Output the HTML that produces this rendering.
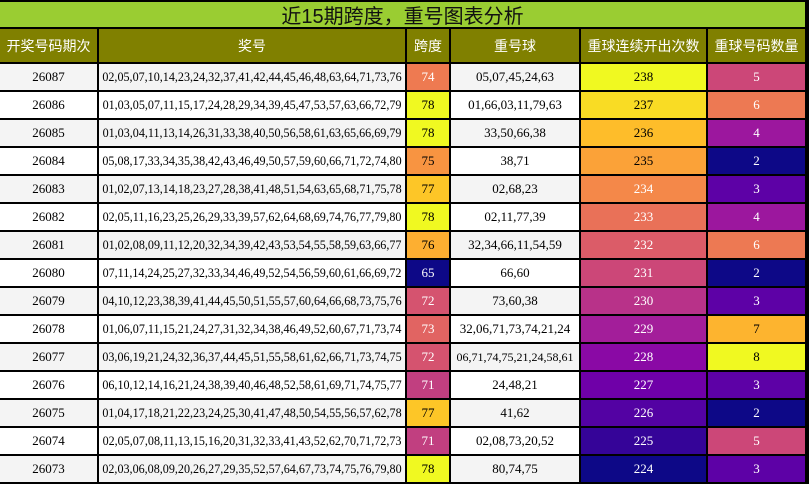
<!DOCTYPE html><html><head><meta charset="utf-8"><style>
body{margin:0;background:#000;}
.g{width:809px;height:484px;box-sizing:border-box;padding:2px 0 2px 0;background:#000;display:grid;grid-template-columns:minmax(0,97px) minmax(0,306px) minmax(0,42px) minmax(0,128px) minmax(0,125px) minmax(0,97px);grid-template-rows:25px 33px repeat(15,26px);gap:2px;font-family:"Liberation Serif","Noto Serif CJK SC",serif;font-size:13px;}
.g>div{display:flex;align-items:center;justify-content:center;white-space:nowrap;overflow:hidden;min-width:0;}
.t{grid-column:1/7;background:#9acd32;font-family:"Liberation Sans","Noto Sans CJK SC",sans-serif;font-size:20px;color:#111;}
.h{background:#808000;color:#fff;font-family:"Liberation Sans","Noto Sans CJK SC",sans-serif;font-size:14px;}
.o{background:#f4f4f4}.e{background:#fff}.w{color:#fff}
.g>div:nth-child(6n+3):not(.h){font-size:12.1px;}
.s{font-size:12px!important}
</style></head><body><div class="g">
<div class="t">近15期跨度，重号图表分析</div>
<div class="h">开奖号码期次</div><div class="h">奖号</div><div class="h">跨度</div><div class="h">重号球</div><div class="h">重球连续开出次数</div><div class="h">重球号码数量</div>

<div class="o">26087</div><div class="o">02,05,07,10,14,23,24,32,37,41,42,44,45,46,48,63,64,71,73,76</div><div class="w" style="background:#ee7a51">74</div><div class="o">05,07,45,24,63</div><div style="background:#f0f921">238</div><div class="w" style="background:#cc4778">5</div>
<div class="e">26086</div><div class="e">01,03,05,07,11,15,17,24,28,29,34,39,45,47,53,57,63,66,72,79</div><div style="background:#f0f921">78</div><div class="e">01,66,03,11,79,63</div><div style="background:#f9dc24">237</div><div class="w" style="background:#ed7953">6</div>
<div class="o">26085</div><div class="o">01,03,04,11,13,14,26,31,33,38,40,50,56,58,61,63,65,66,69,79</div><div style="background:#f0f921">78</div><div class="o">33,50,66,38</div><div style="background:#febd2a">236</div><div class="w" style="background:#9c179e">4</div>
<div class="e">26084</div><div class="e">05,08,17,33,34,35,38,42,43,46,49,50,57,59,60,66,71,72,74,80</div><div style="background:#f89441">75</div><div class="e">38,71</div><div style="background:#fba238">235</div><div class="w" style="background:#0d0887">2</div>
<div class="o">26083</div><div class="o">01,02,07,13,14,18,23,27,28,38,41,48,51,54,63,65,68,71,75,78</div><div style="background:#fdc627">77</div><div class="o">02,68,23</div><div class="w" style="background:#f48849">234</div><div class="w" style="background:#5d01a6">3</div>
<div class="e">26082</div><div class="e">02,05,11,16,23,25,26,29,33,39,57,62,64,68,69,74,76,77,79,80</div><div style="background:#f0f921">78</div><div class="e">02,11,77,39</div><div class="w" style="background:#e97158">233</div><div class="w" style="background:#9c179e">4</div>
<div class="o">26081</div><div class="o">01,02,08,09,11,12,20,32,34,39,42,43,53,54,55,58,59,63,66,77</div><div style="background:#fdaf31">76</div><div class="o">32,34,66,11,54,59</div><div class="w" style="background:#db5c68">232</div><div class="w" style="background:#ed7953">6</div>
<div class="e">26080</div><div class="e">07,11,14,24,25,27,32,33,34,46,49,52,54,56,59,60,61,66,69,72</div><div class="w" style="background:#0d0887">65</div><div class="e">66,60</div><div class="w" style="background:#cc4778">231</div><div class="w" style="background:#0d0887">2</div>
<div class="o">26079</div><div class="o">04,10,12,23,38,39,41,44,45,50,51,55,57,60,64,66,68,73,75,76</div><div class="w" style="background:#d5536f">72</div><div class="o">73,60,38</div><div class="w" style="background:#b83289">230</div><div class="w" style="background:#5d01a6">3</div>
<div class="e">26078</div><div class="e">01,06,07,11,15,21,24,27,31,32,34,38,46,49,52,60,67,71,73,74</div><div class="w" style="background:#e16462">73</div><div class="e">32,06,71,73,74,21,24</div><div class="w" style="background:#a31e9a">229</div><div style="background:#fdb42f">7</div>
<div class="o">26077</div><div class="o">03,06,19,21,24,32,36,37,44,45,51,55,58,61,62,66,71,73,74,75</div><div class="w" style="background:#d5536f">72</div><div class="o s">06,71,74,75,21,24,58,61</div><div class="w" style="background:#8a09a5">228</div><div style="background:#f0f921">8</div>
<div class="e">26076</div><div class="e">06,10,12,14,16,21,24,38,39,40,46,48,52,58,61,69,71,74,75,77</div><div class="w" style="background:#c13f80">71</div><div class="e">24,48,21</div><div class="w" style="background:#6f00a8">227</div><div class="w" style="background:#5d01a6">3</div>
<div class="o">26075</div><div class="o">01,04,17,18,21,22,23,24,25,30,41,47,48,50,54,55,56,57,62,78</div><div style="background:#fdc627">77</div><div class="o">41,62</div><div class="w" style="background:#5302a3">226</div><div class="w" style="background:#0d0887">2</div>
<div class="e">26074</div><div class="e">02,05,07,08,11,13,15,16,20,31,32,33,41,43,52,62,70,71,72,73</div><div class="w" style="background:#c13f80">71</div><div class="e">02,08,73,20,52</div><div class="w" style="background:#350498">225</div><div class="w" style="background:#cc4778">5</div>
<div class="o">26073</div><div class="o">02,03,06,08,09,20,26,27,29,35,52,57,64,67,73,74,75,76,79,80</div><div style="background:#f0f921">78</div><div class="o">80,74,75</div><div class="w" style="background:#0d0887">224</div><div class="w" style="background:#5d01a6">3</div>
</div></body></html>
